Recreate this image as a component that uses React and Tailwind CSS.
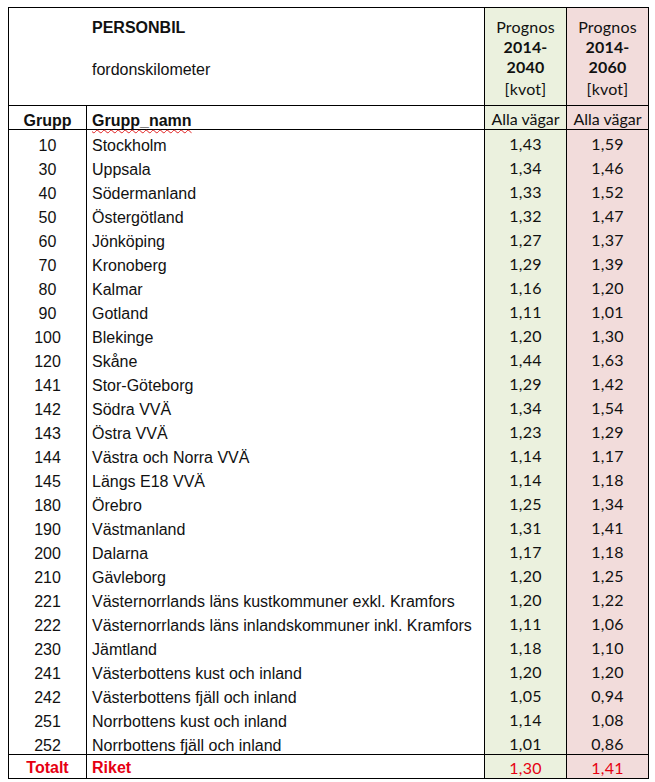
const rows = [
  ['10', 'Stockholm', '1,43', '1,59'],
  ['30', 'Uppsala', '1,34', '1,46'],
  ['40', 'Södermanland', '1,33', '1,52'],
  ['50', 'Östergötland', '1,32', '1,47'],
  ['60', 'Jönköping', '1,27', '1,37'],
  ['70', 'Kronoberg', '1,29', '1,39'],
  ['80', 'Kalmar', '1,16', '1,20'],
  ['90', 'Gotland', '1,11', '1,01'],
  ['100', 'Blekinge', '1,20', '1,30'],
  ['120', 'Skåne', '1,44', '1,63'],
  ['141', 'Stor-Göteborg', '1,29', '1,42'],
  ['142', 'Södra VVÄ', '1,34', '1,54'],
  ['143', 'Östra VVÄ', '1,23', '1,29'],
  ['144', 'Västra och Norra VVÄ', '1,14', '1,17'],
  ['145', 'Längs E18 VVÄ', '1,14', '1,18'],
  ['180', 'Örebro', '1,25', '1,34'],
  ['190', 'Västmanland', '1,31', '1,41'],
  ['200', 'Dalarna', '1,17', '1,18'],
  ['210', 'Gävleborg', '1,20', '1,25'],
  ['221', 'Västernorrlands läns kustkommuner exkl. Kramfors', '1,20', '1,22'],
  ['222', 'Västernorrlands läns inlandskommuner inkl. Kramfors', '1,11', '1,06'],
  ['230', 'Jämtland', '1,18', '1,10'],
  ['241', 'Västerbottens kust och inland', '1,20', '1,20'],
  ['242', 'Västerbottens fjäll och inland', '1,05', '0,94'],
  ['251', 'Norrbottens kust och inland', '1,14', '1,08'],
  ['252', 'Norrbottens fjäll och inland', '1,01', '0,86'],
]

const arial = "font-['Liberation_Sans',Arial,sans-serif] text-[16px] leading-none"
const calibri = "font-['Lato',Carlito,sans-serif] text-[16px] leading-none tracking-[0.2px]"

function Row({ grupp, namn, a, b }) {
  return (
    <div className="flex h-[24px]">
      <div className={`${arial} w-[77px] flex items-end justify-center`}>{grupp}</div>
      <div className={`${arial} w-[398px] border-l border-black flex items-end pl-[5px] whitespace-nowrap`}>{namn}</div>
      <div className={`${calibri} w-[82px] border-l border-black bg-[#ebf1de] flex items-end justify-center pb-[2px]`}>{a}</div>
      <div className={`${calibri} w-[82px] border-l border-black bg-[#f2dcdb] flex items-end justify-center pb-[2px]`}>{b}</div>
    </div>
  )
}

export default function App() {
  return (
    <div className="w-[655px] h-[782px] bg-white text-[#111] pt-[7px] pl-[8px]">
      <div className="w-[641px] border border-black">
        {/* header */}
        <div className="flex h-[98px] border-b border-black">
          <div className={`w-[475px] pl-[83px] pt-[12px] ${arial}`}>
            <div className="font-bold">PERSONBIL</div>
            <div className="mt-[26px]">fordonskilometer</div>
          </div>
          <div className={`${calibri} w-[82px] border-l border-black bg-[#ebf1de] text-center pt-[9px]`}>
            <div className="h-[20px] leading-[20px]">Prognos</div>
            <div className="h-[20px] leading-[20px] font-bold">2014-</div>
            <div className="h-[20px] leading-[20px] font-bold">2040</div>
            <div className="h-[20px] leading-[20px] mt-[2px]">[kvot]</div>
          </div>
          <div className={`${calibri} w-[82px] border-l border-black bg-[#f2dcdb] text-center pt-[9px]`}>
            <div className="h-[20px] leading-[20px]">Prognos</div>
            <div className="h-[20px] leading-[20px] font-bold">2014-</div>
            <div className="h-[20px] leading-[20px] font-bold">2060</div>
            <div className="h-[20px] leading-[20px] mt-[2px]">[kvot]</div>
          </div>
        </div>

        {/* column titles */}
        <div className="flex h-[24px] border-b border-black">
          <div className={`${arial} w-[77px] flex items-end justify-center font-bold`}>Grupp</div>
          <div className={`${arial} w-[398px] border-l border-black flex items-end pl-[5px] font-bold`}>
            <span className="underline decoration-wavy decoration-[#e02020] decoration-1 underline-offset-[3px]">Grupp_namn</span>
          </div>
          <div className={`${calibri} w-[82px] border-l border-black bg-[#ebf1de] flex items-end justify-center pb-[2px] whitespace-nowrap tracking-normal`}>Alla vägar</div>
          <div className={`${calibri} w-[82px] border-l border-black bg-[#f2dcdb] flex items-end justify-center pb-[2px] whitespace-nowrap tracking-normal`}>Alla vägar</div>
        </div>

        {rows.map(r => (
          <Row key={r[0]} grupp={r[0]} namn={r[1]} a={r[2]} b={r[3]} />
        ))}

        {/* total */}
        <div className="flex h-[24px] border-t border-black text-[#e60012]">
          <div className={`${arial} w-[77px] flex items-end justify-center font-bold pb-[2px]`}>Totalt</div>
          <div className={`${arial} w-[398px] border-l border-black flex items-end pl-[5px] font-bold pb-[2px]`}>Riket</div>
          <div className={`${calibri} w-[82px] border-l border-black bg-[#ebf1de] flex items-end justify-center pb-[2px]`}>1,30</div>
          <div className={`${calibri} w-[82px] border-l border-black bg-[#f2dcdb] flex items-end justify-center pb-[2px]`}>1,41</div>
        </div>
      </div>
    </div>
  )
}
